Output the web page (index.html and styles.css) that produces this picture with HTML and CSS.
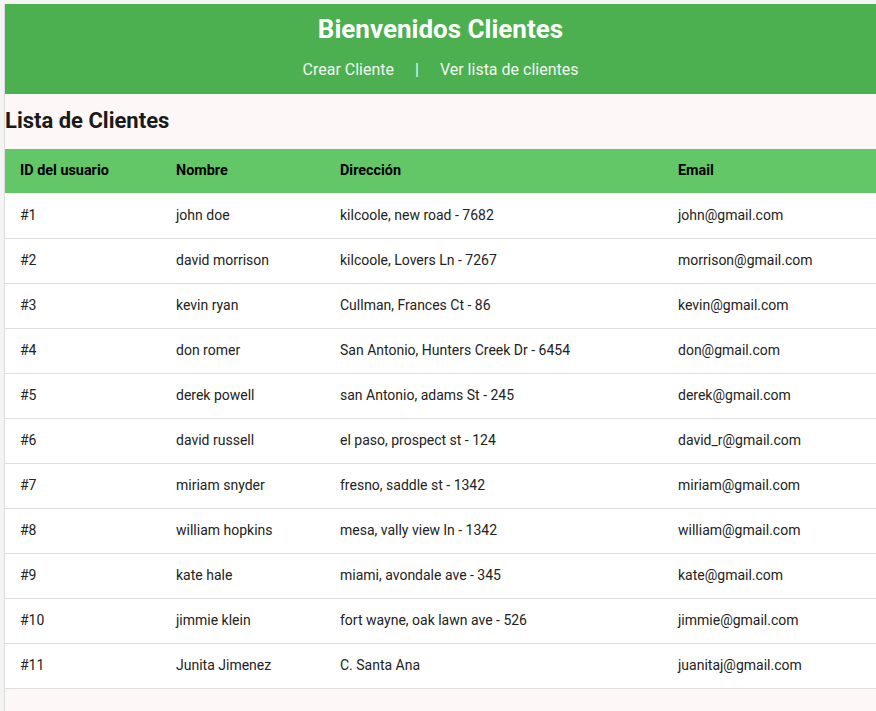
FILE: index.html
```html
<!DOCTYPE html>
<html lang="es">
<head>
<meta charset="utf-8">
<title>Clientes</title>
<link rel="stylesheet" href="styles.css">
</head>
<body>
<div class="page">
  <header class="top">
    <h1 class="title">Bienvenidos Clientes</h1>
    <nav class="nav">
      <a href="#">Crear Cliente</a>
      <span class="sep">|</span>
      <a href="#">Ver lista de clientes</a>
    </nav>
  </header>
  <main class="content">
    <h2 class="heading">Lista de Clientes</h2>
    <table class="clients">
      <colgroup>
        <col class="c1"><col class="c2"><col class="c3"><col class="c4">
      </colgroup>
      <thead>
        <tr><th>ID del usuario</th><th>Nombre</th><th>Dirección</th><th>Email</th></tr>
      </thead>
      <tbody>
        <tr><td>#1</td><td>john doe</td><td>kilcoole, new road - 7682</td><td>john@gmail.com</td></tr>
        <tr><td>#2</td><td>david morrison</td><td>kilcoole, Lovers Ln - 7267</td><td>morrison@gmail.com</td></tr>
        <tr><td>#3</td><td>kevin ryan</td><td>Cullman, Frances Ct - 86</td><td>kevin@gmail.com</td></tr>
        <tr><td>#4</td><td>don romer</td><td>San Antonio, Hunters Creek Dr - 6454</td><td>don@gmail.com</td></tr>
        <tr><td>#5</td><td>derek powell</td><td>san Antonio, adams St - 245</td><td>derek@gmail.com</td></tr>
        <tr><td>#6</td><td>david russell</td><td>el paso, prospect st - 124</td><td>david_r@gmail.com</td></tr>
        <tr><td>#7</td><td>miriam snyder</td><td>fresno, saddle st - 1342</td><td>miriam@gmail.com</td></tr>
        <tr><td>#8</td><td>william hopkins</td><td>mesa, vally view ln - 1342</td><td>william@gmail.com</td></tr>
        <tr><td>#9</td><td>kate hale</td><td>miami, avondale ave - 345</td><td>kate@gmail.com</td></tr>
        <tr><td>#10</td><td>jimmie klein</td><td>fort wayne, oak lawn ave - 526</td><td>jimmie@gmail.com</td></tr>
        <tr><td>#11</td><td>Junita Jimenez</td><td>C. Santa Ana</td><td>juanitaj@gmail.com</td></tr>
      </tbody>
    </table>
  </main>
</div>
</body>
</html>
```

FILE: styles.css
```css
html, body {
  margin: 0;
  padding: 0;
  background: #f4f4f4;
  font-family: Roboto, "Liberation Sans", sans-serif;
}

.page {
  margin: 4px 0 0 4px;
  border-left: 1px solid #dcdcdc;
  background: #fdf7f7;
  min-height: 707px;
}

.top {
  background: #4caf50;
  height: 90px;
  box-sizing: border-box;
  padding-top: 9px;
  text-align: center;
  color: #fff;
}

.title {
  margin: 0;
  font-size: 26px;
  font-weight: 700;
  line-height: 32px;
}

.nav {
  margin-top: 15px;
  font-size: 16px;
  line-height: 20px;
  color: #f1f8f1;
}

.nav a {
  color: inherit;
  text-decoration: none;
}

.sep {
  margin: 0 17px;
}

.content {
  padding: 0;
}

.heading {
  margin: 0;
  padding: 13px 0 14px;
  font-size: 22px;
  font-weight: 700;
  line-height: 28px;
  color: #1a1a1a;
}

.clients {
  width: 100%;
  border-collapse: collapse;
  font-size: 14px;
  color: #222;
  background: #fff;
}

.c1 { width: 156px; }
.c2 { width: 164px; }
.c3 { width: 338px; }

.clients th {
  background: #63c768;
  color: #000;
  font-size: 14.4px;
  font-weight: 700;
  text-align: left;
  padding: 0 15px 2px;
  height: 42px;
}

.clients td {
  padding: 0 15px 2px;
  height: 42px;
  border-bottom: 1px solid #dddddd;
}

.clients tbody tr:first-child td {
  padding-top: 1px;
}
```
